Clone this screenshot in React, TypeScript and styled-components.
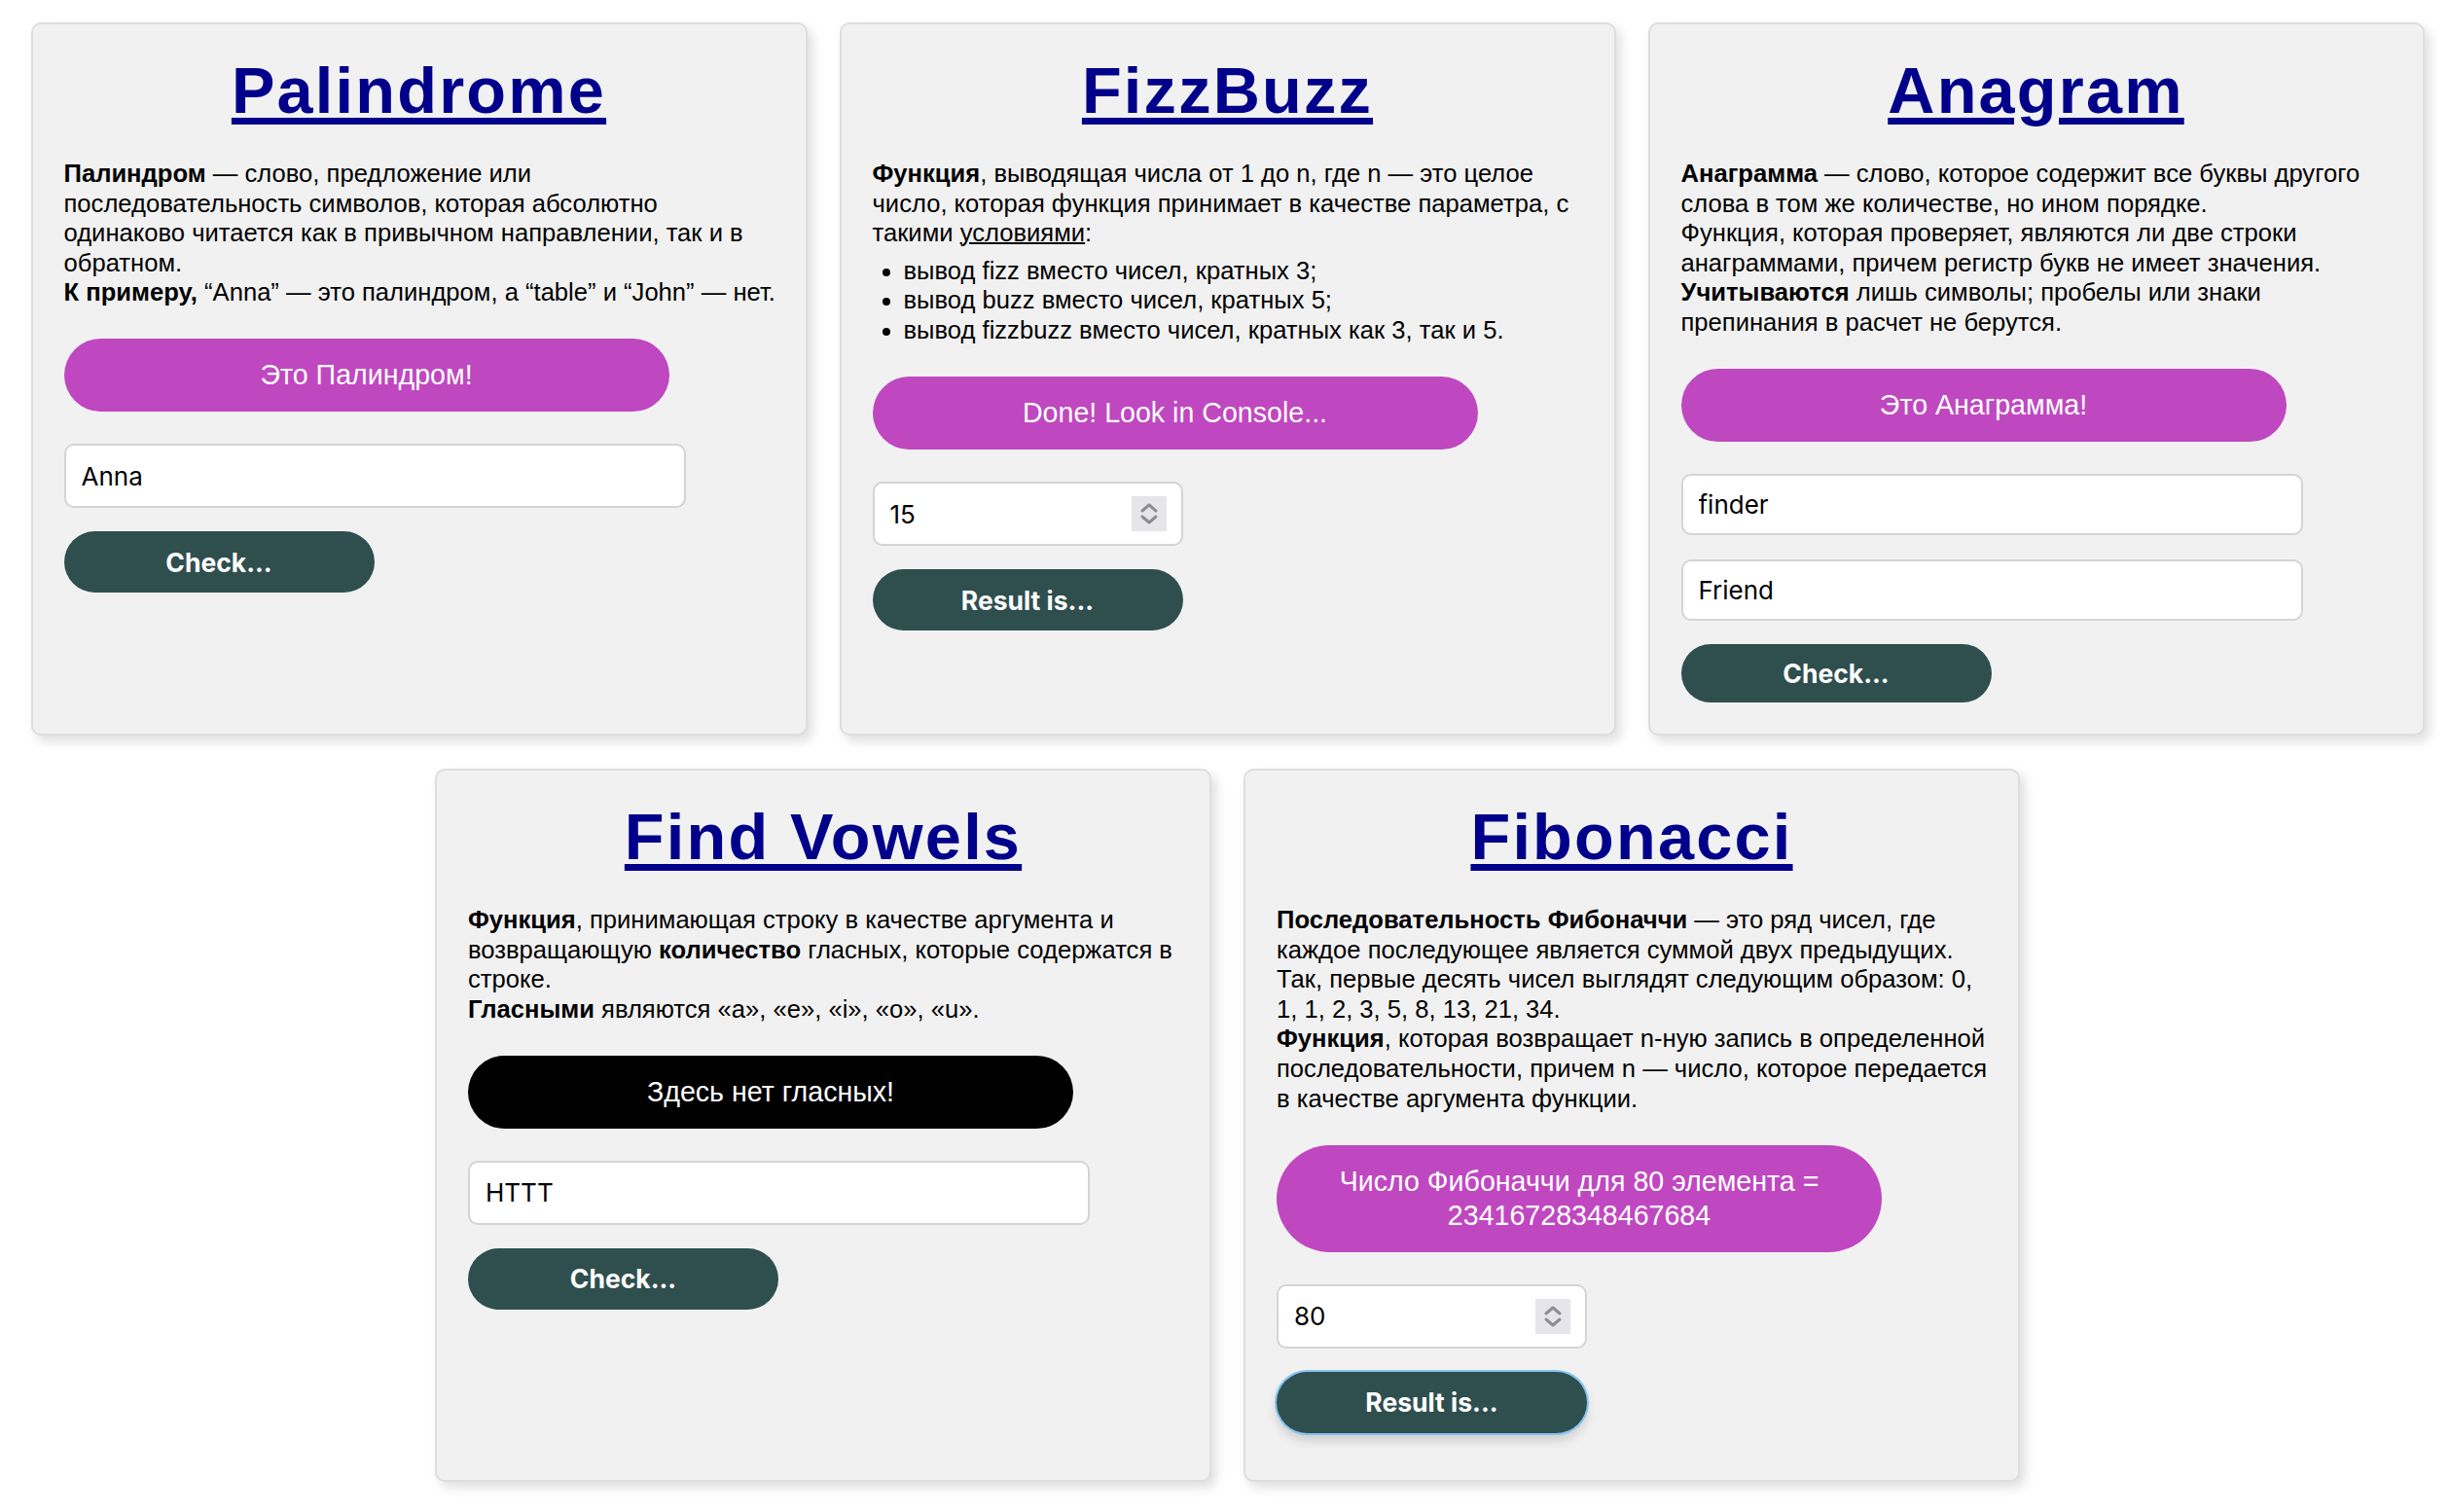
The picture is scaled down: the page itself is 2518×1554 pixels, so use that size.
import React from "react";
import styled, { createGlobalStyle, css } from "styled-components";

const GlobalStyle = createGlobalStyle`
  html, body {
    margin: 0;
    padding: 0;
    background: #ffffff;
  }
  body {
    font-family: "Liberation Sans", Arial, Helvetica, sans-serif;
    color: #000;
  }
  * { box-sizing: border-box; }
`;

const Page = styled.main`
  display: flex;
  flex-wrap: wrap;
  justify-content: center;
  gap: 34px 33px;
  padding: 23px 0 30px 5px;
`;

const Card = styled.section`
  width: 798px;
  height: 733px;
  display: flex;
  flex-direction: column;
  align-items: flex-start;
  padding: 30px 32px 32px;
  background: #f1f1f1;
  border: 2px solid #dedede;
  border-radius: 10px;
  box-shadow: 5px 6px 12px rgba(0, 0, 0, 0.13);
`;

const Title = styled.h2`
  align-self: stretch;
  margin: 0 0 32px;
  text-align: center;
  font-family: "Liberation Sans", Arial, sans-serif;
  font-size: 66.7px;
  font-weight: 700;
  line-height: normal;
  letter-spacing: 2.2px;
  color: #00008b;
  text-decoration: underline;
  text-decoration-thickness: 6.5px;
  text-underline-offset: 5px;
`;

const Description = styled.div`
  align-self: stretch;
  margin: 0 0 32.5px;
  font-size: 25.6px;
  line-height: 30.6px;
  white-space: nowrap;
  color: #000;

  b {
    font-weight: 700;
  }
  u {
    text-decoration: underline;
    text-decoration-thickness: 2px;
  }
`;

const Paragraph = styled.p`
  margin: 0;
`;

const Conditions = styled.ul`
  margin: 8px 0 0;
  padding-left: 32px;
  list-style: disc;
`;

const ResultBanner = styled.div<{ $tone: "pink" | "black" }>`
  width: 622px;
  padding: 20px 40px;
  margin-bottom: 33px;
  border-radius: 60px;
  text-align: center;
  font-family: "Liberation Sans", Arial, sans-serif;
  font-size: 28.6px;
  line-height: 35px;
  color: #ffffff;
  background: ${(p) => (p.$tone === "pink" ? "#bf48c0" : "#000000")};
`;

const fieldBase = css`
  height: 66px;
  padding: 0 16px;
  border: 2px solid #d4d4d4;
  border-radius: 10px;
  background: #ffffff;
  font-family: Inter, "Liberation Sans", sans-serif;
  font-size: 26px;
  color: #000;
  outline: none;
`;

const TextInput = styled.input`
  ${fieldBase};
  width: 639px;
  margin-bottom: 24px;

  & + & {
    margin-top: 1px;
  }
`;

const NumberWrap = styled.div`
  position: relative;
  width: 319px;
  margin-bottom: 24px;
`;

const NumberInput = styled.input`
  ${fieldBase};
  width: 100%;
  -moz-appearance: textfield;
  &::-webkit-outer-spin-button,
  &::-webkit-inner-spin-button {
    -webkit-appearance: none;
    margin: 0;
  }
`;

const Spinner = styled.span`
  position: absolute;
  top: 15px;
  right: 17px;
  width: 36px;
  height: 36px;
  display: flex;
  align-items: center;
  justify-content: center;
  background: #e6e5ea;
  pointer-events: none;
`;

const ActionButton = styled.button<{ $focused?: boolean }>`
  width: 319px;
  height: 63px;
  border: none;
  border-radius: 32px;
  background: #2f4f4f;
  color: #ffffff;
  font-family: Inter, "Liberation Sans", sans-serif;
  font-size: 26.5px;
  font-weight: 700;
  cursor: pointer;
  ${(p) =>
    p.$focused &&
    css`
      box-shadow: 0 0 0 2px #86c4f1, 0 7px 12px rgba(0, 0, 0, 0.16);
    `}
`;

const SpinIcon = () => (
  <svg width="22" height="26" viewBox="0 0 22 26" fill="none">
    <polyline
      points="4,10 11,4 18,10"
      stroke="#8f8c97"
      strokeWidth="3"
      strokeLinecap="round"
      strokeLinejoin="round"
    />
    <polyline
      points="4,16 11,22 18,16"
      stroke="#8f8c97"
      strokeWidth="3"
      strokeLinecap="round"
      strokeLinejoin="round"
    />
  </svg>
);

const NumberField = ({ value }: { value: string }) => (
  <NumberWrap>
    <NumberInput type="number" defaultValue={value} />
    <Spinner>
      <SpinIcon />
    </Spinner>
  </NumberWrap>
);

export default function App() {
  return (
    <>
      <GlobalStyle />
      <Page>
        <Card>
          <Title>Palindrome</Title>
          <Description>
            <Paragraph>
              <b>Палиндром</b> — слово, предложение или
              <br />
              последовательность символов, которая абсолютно
              <br />
              одинаково читается как в привычном направлении, так и в
              <br />
              обратном.
              <br />
              <b>К примеру,</b> “Anna” — это палиндром, а “table” и “John” — нет.
            </Paragraph>
          </Description>
          <ResultBanner $tone="pink">Это Палиндром!</ResultBanner>
          <TextInput type="text" defaultValue="Anna" />
          <ActionButton>Check...</ActionButton>
        </Card>

        <Card>
          <Title>FizzBuzz</Title>
          <Description>
            <Paragraph>
              <b>Функция</b>, выводящая числа от 1 до n, где n — это целое
              <br />
              число, которая функция принимает в качестве параметра, с
              <br />
              такими <u>условиями</u>:
            </Paragraph>
            <Conditions>
              <li>вывод fizz вместо чисел, кратных 3;</li>
              <li>вывод buzz вместо чисел, кратных 5;</li>
              <li>вывод fizzbuzz вместо чисел, кратных как 3, так и 5.</li>
            </Conditions>
          </Description>
          <ResultBanner $tone="pink">Done! Look in Console...</ResultBanner>
          <NumberField value="15" />
          <ActionButton>Result is...</ActionButton>
        </Card>

        <Card>
          <Title>Anagram</Title>
          <Description>
            <Paragraph>
              <b>Анаграмма</b> — слово, которое содержит все буквы другого
              <br />
              слова в том же количестве, но ином порядке.
              <br />
              Функция, которая проверяет, являются ли две строки
              <br />
              анаграммами, причем регистр букв не имеет значения.
              <br />
              <b>Учитываются</b> лишь символы; пробелы или знаки
              <br />
              препинания в расчет не берутся.
            </Paragraph>
          </Description>
          <ResultBanner $tone="pink">Это Анаграмма!</ResultBanner>
          <TextInput type="text" defaultValue="finder" />
          <TextInput type="text" defaultValue="Friend" />
          <ActionButton>Check...</ActionButton>
        </Card>

        <Card>
          <Title>Find Vowels</Title>
          <Description>
            <Paragraph>
              <b>Функция</b>, принимающая строку в качестве аргумента и
              <br />
              возвращающую <b>количество</b> гласных, которые содержатся в
              <br />
              строке.
              <br />
              <b>Гласными</b> являются «a», «e», «i», «o», «u».
            </Paragraph>
          </Description>
          <ResultBanner $tone="black">Здесь нет гласных!</ResultBanner>
          <TextInput type="text" defaultValue="HTTT" />
          <ActionButton>Check...</ActionButton>
        </Card>

        <Card>
          <Title>Fibonacci</Title>
          <Description>
            <Paragraph>
              <b>Последовательность Фибоначчи</b> — это ряд чисел, где
              <br />
              каждое последующее является суммой двух предыдущих.
              <br />
              Так, первые десять чисел выглядят следующим образом: 0,
              <br />
              1, 1, 2, 3, 5, 8, 13, 21, 34.
              <br />
              <b>Функция</b>, которая возвращает n-ную запись в определенной
              <br />
              последовательности, причем n — число, которое передается
              <br />
              в качестве аргумента функции.
            </Paragraph>
          </Description>
          <ResultBanner $tone="pink">
            Число Фибоначчи для 80 элемента = 23416728348467684
          </ResultBanner>
          <NumberField value="80" />
          <ActionButton $focused>Result is...</ActionButton>
        </Card>
      </Page>
    </>
  );
}
